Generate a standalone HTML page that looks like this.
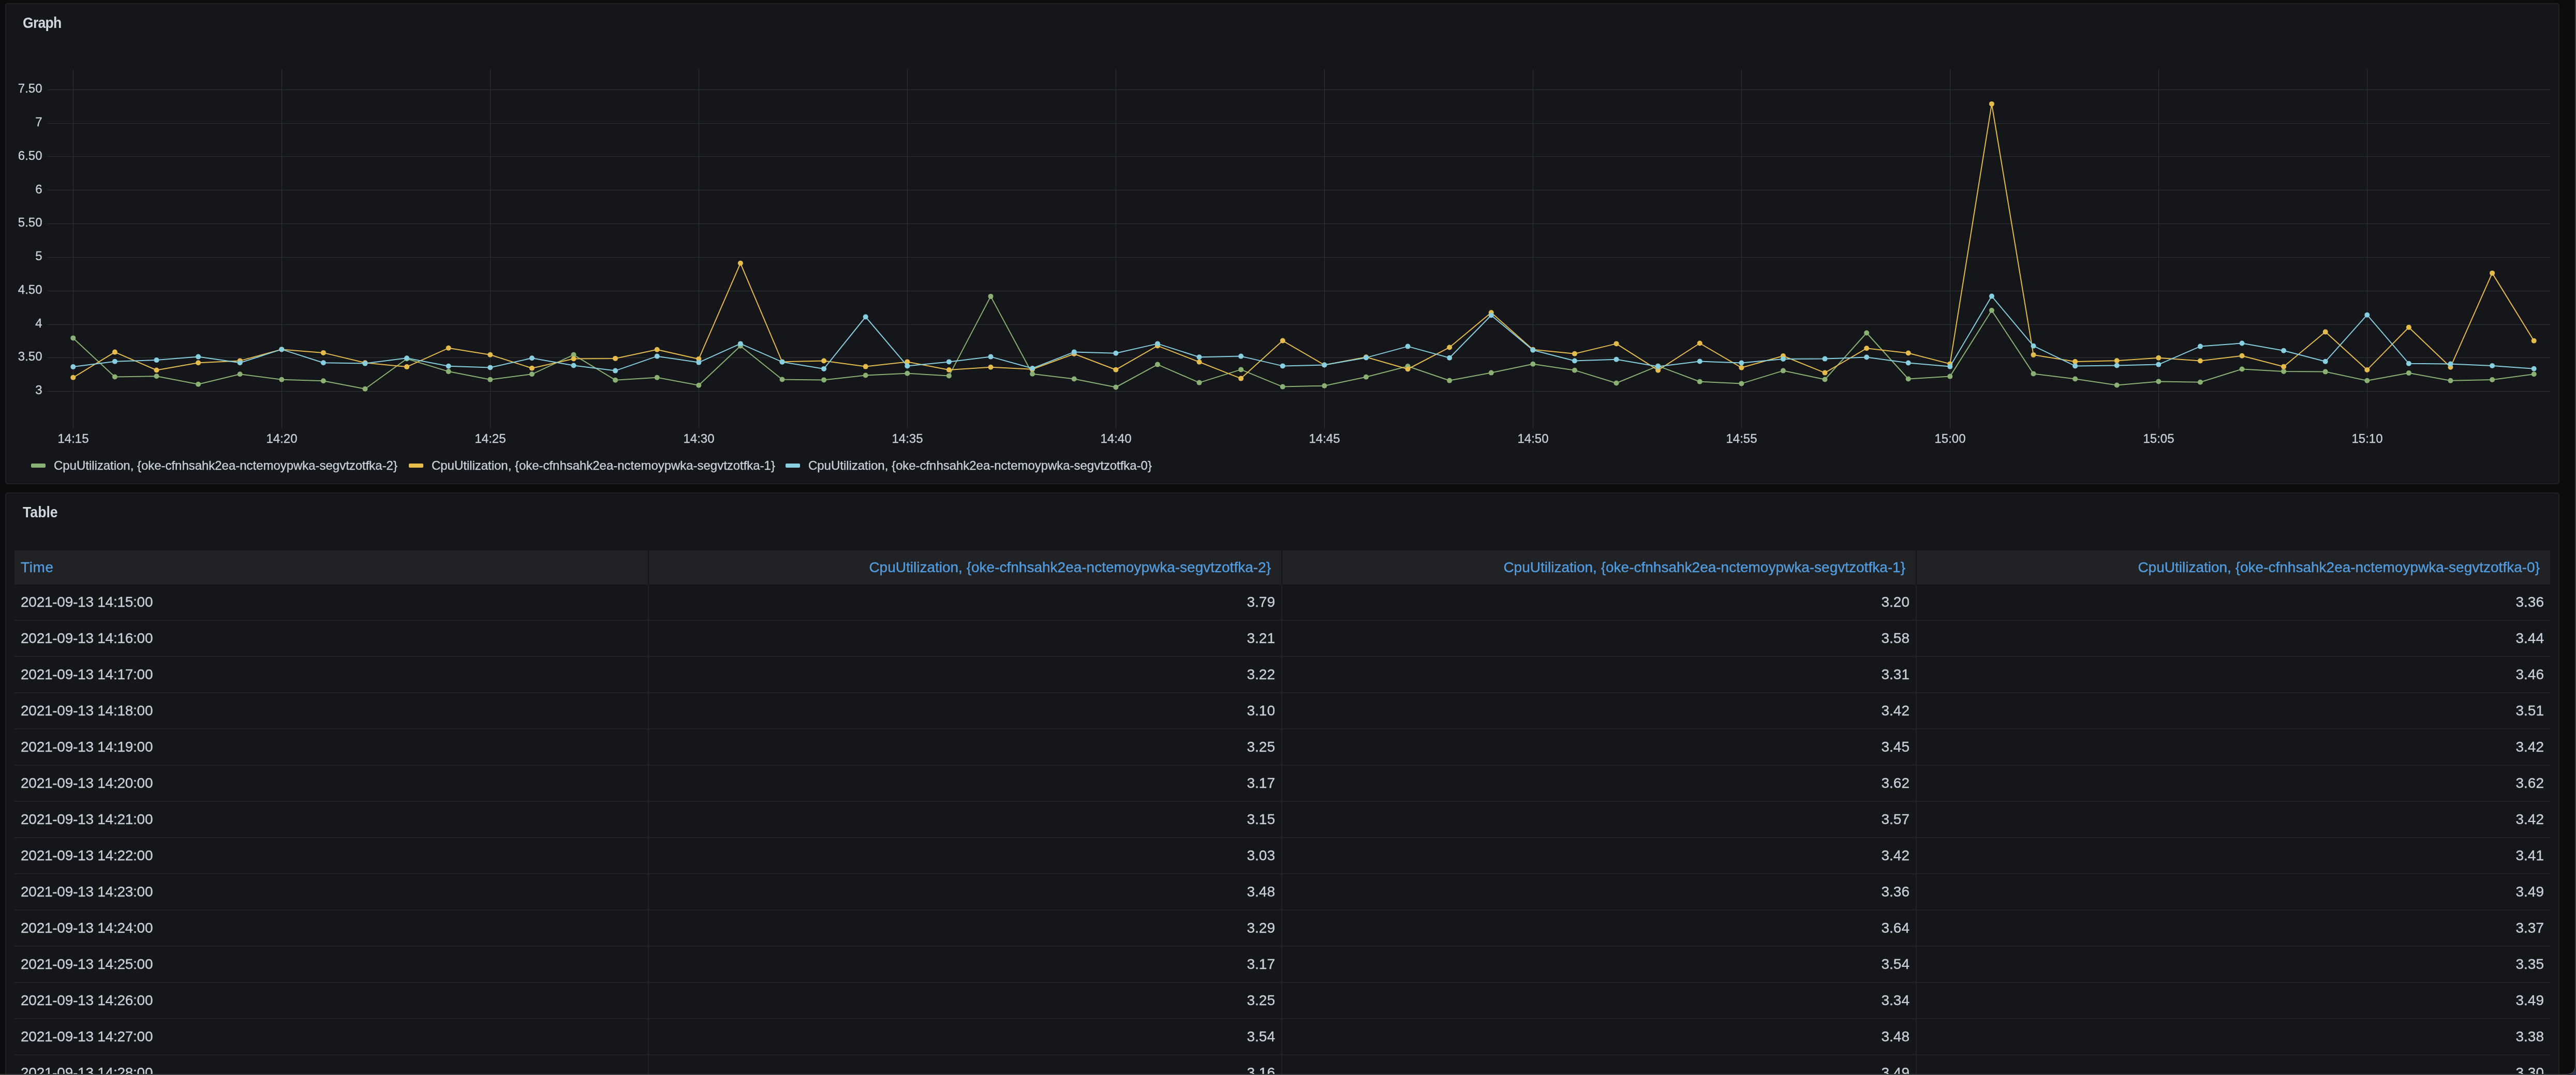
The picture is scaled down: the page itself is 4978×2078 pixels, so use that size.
<!DOCTYPE html>
<html lang="en"><head><meta charset="utf-8"><title>Explore - Grafana</title>
<style>
html,body{margin:0;padding:0}
body{width:4978px;height:2078px;overflow:hidden;background:#0b0c0e;position:relative;
font-family:"Liberation Sans",Arial,Helvetica,sans-serif;color:#c7d0d9}
.panel{position:absolute;left:10px;width:4936px;box-sizing:border-box;background:#141619;border:2px solid #202226;border-radius:5px}
#gp{top:6px;height:930px}
#tp{top:952px;height:1300px}
.ttl{position:absolute;left:44px;font-size:29px;font-weight:bold;line-height:32px;letter-spacing:-1.5px;color:#d0d7de;white-space:nowrap}
#fg{position:absolute;left:0;top:0;width:4978px;height:2078px;will-change:transform}
.ttl{transform-origin:0 50%}
.chart{position:absolute;left:0;top:0}
.ax text{font-size:24px;font-family:"Liberation Sans",Arial,sans-serif}
.sw{position:absolute;top:896px;width:28px;height:8px;border-radius:2px;display:block}
.lg{position:absolute;top:884px;font-size:24px;line-height:32px;white-space:nowrap;letter-spacing:-0.03px}
.th{position:absolute;top:1064px;height:66px;background:#202226;color:#539ee0;font-size:28px;line-height:66px;box-sizing:border-box;white-space:nowrap;overflow:hidden}
.tr{position:absolute;left:28px;width:4900px;height:70px;box-sizing:border-box;border-bottom:2px solid #202226}
.td,.th,.lg{-webkit-text-stroke:0.35px currentColor}
.ax text{stroke:currentColor;stroke-width:0.35px}
.td{position:absolute;top:0;height:68px;line-height:68px;font-size:28px;box-sizing:border-box;white-space:nowrap;padding:0 12px;border-right:2px solid #202226}
.c1{left:0;width:1226px;text-align:left;letter-spacing:-0.25px}
.c2{left:1226px;width:1224px;text-align:right}
.c3{left:2450px;width:1226px;text-align:right}
.c4{left:3676px;width:1224px;text-align:right;border-right:none}
.th.c1{left:28px;padding-left:12px;text-align:left;width:1224px;letter-spacing:0.6px}
.th.c2{left:1254px;width:1222px;text-align:right;padding-right:20px}
.th.c3{left:2478px;width:1224px;text-align:right;padding-right:20px}
.th.c4{left:3704px;width:1224px;text-align:right;padding-right:20px}
#wr{position:absolute;left:0;top:0;width:4978px;height:2078px;box-sizing:border-box;pointer-events:none}
</style></head>
<body>
<div class="panel" id="gp"></div>
<div class="panel" id="tp"></div>
<div id="fg">
<div class="ttl" style="top:28px;letter-spacing:-0.8px;transform:scaleX(0.915)">Graph</div>
<svg class="chart" width="4978" height="940" viewBox="0 0 4978 940">
<g fill="#2d3236" shape-rendering="crispEdges"><rect x="141" y="134" width="1" height="694"/><rect x="544" y="134" width="1" height="694"/><rect x="947" y="134" width="1" height="694"/><rect x="1350" y="134" width="1" height="694"/><rect x="1753" y="134" width="1" height="694"/><rect x="2156" y="134" width="1" height="694"/><rect x="2559" y="134" width="1" height="694"/><rect x="2962" y="134" width="1" height="694"/><rect x="3365" y="134" width="1" height="694"/><rect x="3768" y="134" width="1" height="694"/><rect x="4171" y="134" width="1" height="694"/><rect x="4574" y="134" width="1" height="694"/><rect x="92" y="756" width="4836" height="1"/><rect x="92" y="691" width="4836" height="1"/><rect x="92" y="627" width="4836" height="1"/><rect x="92" y="562" width="4836" height="1"/><rect x="92" y="497" width="4836" height="1"/><rect x="92" y="432" width="4836" height="1"/><rect x="92" y="367" width="4836" height="1"/><rect x="92" y="302" width="4836" height="1"/><rect x="92" y="238" width="4836" height="1"/><rect x="92" y="173" width="4836" height="1"/></g>
<polyline fill="none" stroke="#8ab173" stroke-width="2" stroke-linejoin="round" points="141.3,653.4 221.9,728.5 302.5,727.2 383.1,742.7 463.7,723.3 544.3,733.7 624.9,736.3 705.5,751.8 786.1,693.5 866.7,718.1 947.3,733.7 1027.9,723.3 1108.5,685.8 1189.1,734.7 1269.7,729.8 1350.3,744.8 1430.9,668.7 1511.5,733.5 1592.1,734.4 1672.7,725.5 1753.3,721.8 1833.9,726.4 1914.5,572.9 1995.1,722.7 2075.7,732.5 2156.3,748.5 2236.9,704.6 2317.5,739.6 2398.1,714.4 2478.7,747.6 2559.3,745.7 2639.9,728.8 2720.5,708.0 2801.1,735.6 2881.7,720.6 2962.3,703.7 3042.9,715.7 3123.5,740.5 3204.1,707.4 3284.7,737.7 3365.3,741.4 3445.9,716.6 3526.5,733.5 3607.1,643.5 3687.7,732.5 3768.3,727.6 3848.9,600.0 3929.5,722.4 4010.1,732.5 4090.7,744.5 4171.3,737.4 4251.9,738.7 4332.5,713.5 4413.1,717.9 4493.7,718.6 4574.3,735.8 4654.9,721.1 4735.5,735.8 4816.1,734.0 4896.7,723.2"/>
<g fill="#8ab173"><circle cx="141.3" cy="653.4" r="5"/><circle cx="221.9" cy="728.5" r="5"/><circle cx="302.5" cy="727.2" r="5"/><circle cx="383.1" cy="742.7" r="5"/><circle cx="463.7" cy="723.3" r="5"/><circle cx="544.3" cy="733.7" r="5"/><circle cx="624.9" cy="736.3" r="5"/><circle cx="705.5" cy="751.8" r="5"/><circle cx="786.1" cy="693.5" r="5"/><circle cx="866.7" cy="718.1" r="5"/><circle cx="947.3" cy="733.7" r="5"/><circle cx="1027.9" cy="723.3" r="5"/><circle cx="1108.5" cy="685.8" r="5"/><circle cx="1189.1" cy="734.7" r="5"/><circle cx="1269.7" cy="729.8" r="5"/><circle cx="1350.3" cy="744.8" r="5"/><circle cx="1430.9" cy="668.7" r="5"/><circle cx="1511.5" cy="733.5" r="5"/><circle cx="1592.1" cy="734.4" r="5"/><circle cx="1672.7" cy="725.5" r="5"/><circle cx="1753.3" cy="721.8" r="5"/><circle cx="1833.9" cy="726.4" r="5"/><circle cx="1914.5" cy="572.9" r="5"/><circle cx="1995.1" cy="722.7" r="5"/><circle cx="2075.7" cy="732.5" r="5"/><circle cx="2156.3" cy="748.5" r="5"/><circle cx="2236.9" cy="704.6" r="5"/><circle cx="2317.5" cy="739.6" r="5"/><circle cx="2398.1" cy="714.4" r="5"/><circle cx="2478.7" cy="747.6" r="5"/><circle cx="2559.3" cy="745.7" r="5"/><circle cx="2639.9" cy="728.8" r="5"/><circle cx="2720.5" cy="708.0" r="5"/><circle cx="2801.1" cy="735.6" r="5"/><circle cx="2881.7" cy="720.6" r="5"/><circle cx="2962.3" cy="703.7" r="5"/><circle cx="3042.9" cy="715.7" r="5"/><circle cx="3123.5" cy="740.5" r="5"/><circle cx="3204.1" cy="707.4" r="5"/><circle cx="3284.7" cy="737.7" r="5"/><circle cx="3365.3" cy="741.4" r="5"/><circle cx="3445.9" cy="716.6" r="5"/><circle cx="3526.5" cy="733.5" r="5"/><circle cx="3607.1" cy="643.5" r="5"/><circle cx="3687.7" cy="732.5" r="5"/><circle cx="3768.3" cy="727.6" r="5"/><circle cx="3848.9" cy="600.0" r="5"/><circle cx="3929.5" cy="722.4" r="5"/><circle cx="4010.1" cy="732.5" r="5"/><circle cx="4090.7" cy="744.5" r="5"/><circle cx="4171.3" cy="737.4" r="5"/><circle cx="4251.9" cy="738.7" r="5"/><circle cx="4332.5" cy="713.5" r="5"/><circle cx="4413.1" cy="717.9" r="5"/><circle cx="4493.7" cy="718.6" r="5"/><circle cx="4574.3" cy="735.8" r="5"/><circle cx="4654.9" cy="721.1" r="5"/><circle cx="4735.5" cy="735.8" r="5"/><circle cx="4816.1" cy="734.0" r="5"/><circle cx="4896.7" cy="723.2" r="5"/></g>
<polyline fill="none" stroke="#e5bb4c" stroke-width="2" stroke-linejoin="round" points="141.3,729.8 221.9,680.6 302.5,715.5 383.1,701.3 463.7,697.4 544.3,675.4 624.9,681.9 705.5,701.3 786.1,709.1 866.7,672.8 947.3,685.8 1027.9,711.7 1108.5,693.5 1189.1,692.9 1269.7,675.8 1350.3,693.9 1430.9,508.8 1511.5,699.4 1592.1,697.5 1672.7,708.6 1753.3,699.4 1833.9,715.0 1914.5,709.8 1995.1,713.8 2075.7,684.0 2156.3,714.7 2236.9,668.4 2317.5,699.7 2398.1,731.6 2478.7,658.6 2559.3,705.5 2639.9,690.2 2720.5,713.5 2801.1,671.5 2881.7,604.2 2962.3,675.8 3042.9,683.7 3123.5,664.4 3204.1,715.7 3284.7,663.5 3365.3,710.7 3445.9,688.0 3526.5,720.6 3607.1,673.3 3687.7,682.5 3768.3,703.4 3848.9,200.9 3929.5,685.9 4010.1,699.1 4090.7,697.2 4171.3,691.7 4251.9,697.5 4332.5,687.7 4413.1,708.7 4493.7,641.6 4574.3,714.9 4654.9,632.7 4735.5,709.7 4816.1,527.9 4896.7,658.8"/>
<g fill="#e5bb4c"><circle cx="141.3" cy="729.8" r="5"/><circle cx="221.9" cy="680.6" r="5"/><circle cx="302.5" cy="715.5" r="5"/><circle cx="383.1" cy="701.3" r="5"/><circle cx="463.7" cy="697.4" r="5"/><circle cx="544.3" cy="675.4" r="5"/><circle cx="624.9" cy="681.9" r="5"/><circle cx="705.5" cy="701.3" r="5"/><circle cx="786.1" cy="709.1" r="5"/><circle cx="866.7" cy="672.8" r="5"/><circle cx="947.3" cy="685.8" r="5"/><circle cx="1027.9" cy="711.7" r="5"/><circle cx="1108.5" cy="693.5" r="5"/><circle cx="1189.1" cy="692.9" r="5"/><circle cx="1269.7" cy="675.8" r="5"/><circle cx="1350.3" cy="693.9" r="5"/><circle cx="1430.9" cy="508.8" r="5"/><circle cx="1511.5" cy="699.4" r="5"/><circle cx="1592.1" cy="697.5" r="5"/><circle cx="1672.7" cy="708.6" r="5"/><circle cx="1753.3" cy="699.4" r="5"/><circle cx="1833.9" cy="715.0" r="5"/><circle cx="1914.5" cy="709.8" r="5"/><circle cx="1995.1" cy="713.8" r="5"/><circle cx="2075.7" cy="684.0" r="5"/><circle cx="2156.3" cy="714.7" r="5"/><circle cx="2236.9" cy="668.4" r="5"/><circle cx="2317.5" cy="699.7" r="5"/><circle cx="2398.1" cy="731.6" r="5"/><circle cx="2478.7" cy="658.6" r="5"/><circle cx="2559.3" cy="705.5" r="5"/><circle cx="2639.9" cy="690.2" r="5"/><circle cx="2720.5" cy="713.5" r="5"/><circle cx="2801.1" cy="671.5" r="5"/><circle cx="2881.7" cy="604.2" r="5"/><circle cx="2962.3" cy="675.8" r="5"/><circle cx="3042.9" cy="683.7" r="5"/><circle cx="3123.5" cy="664.4" r="5"/><circle cx="3204.1" cy="715.7" r="5"/><circle cx="3284.7" cy="663.5" r="5"/><circle cx="3365.3" cy="710.7" r="5"/><circle cx="3445.9" cy="688.0" r="5"/><circle cx="3526.5" cy="720.6" r="5"/><circle cx="3607.1" cy="673.3" r="5"/><circle cx="3687.7" cy="682.5" r="5"/><circle cx="3768.3" cy="703.4" r="5"/><circle cx="3848.9" cy="200.9" r="5"/><circle cx="3929.5" cy="685.9" r="5"/><circle cx="4010.1" cy="699.1" r="5"/><circle cx="4090.7" cy="697.2" r="5"/><circle cx="4171.3" cy="691.7" r="5"/><circle cx="4251.9" cy="697.5" r="5"/><circle cx="4332.5" cy="687.7" r="5"/><circle cx="4413.1" cy="708.7" r="5"/><circle cx="4493.7" cy="641.6" r="5"/><circle cx="4574.3" cy="714.9" r="5"/><circle cx="4654.9" cy="632.7" r="5"/><circle cx="4735.5" cy="709.7" r="5"/><circle cx="4816.1" cy="527.9" r="5"/><circle cx="4896.7" cy="658.8" r="5"/></g>
<polyline fill="none" stroke="#86cee0" stroke-width="2" stroke-linejoin="round" points="141.3,709.1 221.9,698.7 302.5,696.1 383.1,689.6 463.7,701.3 544.3,675.4 624.9,701.3 705.5,702.6 786.1,692.2 866.7,707.8 947.3,710.4 1027.9,692.2 1108.5,706.5 1189.1,716.6 1269.7,688.6 1350.3,700.6 1430.9,664.4 1511.5,699.7 1592.1,712.9 1672.7,612.5 1753.3,707.4 1833.9,699.4 1914.5,689.6 1995.1,712.0 2075.7,680.4 2156.3,682.8 2236.9,664.4 2317.5,690.2 2398.1,688.6 2478.7,707.4 2559.3,705.5 2639.9,691.4 2720.5,669.6 2801.1,691.7 2881.7,609.5 2962.3,676.7 3042.9,697.5 3123.5,694.8 3204.1,708.6 3284.7,698.5 3365.3,701.5 3445.9,693.9 3526.5,693.6 3607.1,690.5 3687.7,701.5 3768.3,708.6 3848.9,572.6 3929.5,668.7 4010.1,707.4 4090.7,706.4 4171.3,704.6 4251.9,669.6 4332.5,663.5 4413.1,677.8 4493.7,698.8 4574.3,608.7 4654.9,702.7 4735.5,703.6 4816.1,707.0 4896.7,712.8"/>
<g fill="#86cee0"><circle cx="141.3" cy="709.1" r="5"/><circle cx="221.9" cy="698.7" r="5"/><circle cx="302.5" cy="696.1" r="5"/><circle cx="383.1" cy="689.6" r="5"/><circle cx="463.7" cy="701.3" r="5"/><circle cx="544.3" cy="675.4" r="5"/><circle cx="624.9" cy="701.3" r="5"/><circle cx="705.5" cy="702.6" r="5"/><circle cx="786.1" cy="692.2" r="5"/><circle cx="866.7" cy="707.8" r="5"/><circle cx="947.3" cy="710.4" r="5"/><circle cx="1027.9" cy="692.2" r="5"/><circle cx="1108.5" cy="706.5" r="5"/><circle cx="1189.1" cy="716.6" r="5"/><circle cx="1269.7" cy="688.6" r="5"/><circle cx="1350.3" cy="700.6" r="5"/><circle cx="1430.9" cy="664.4" r="5"/><circle cx="1511.5" cy="699.7" r="5"/><circle cx="1592.1" cy="712.9" r="5"/><circle cx="1672.7" cy="612.5" r="5"/><circle cx="1753.3" cy="707.4" r="5"/><circle cx="1833.9" cy="699.4" r="5"/><circle cx="1914.5" cy="689.6" r="5"/><circle cx="1995.1" cy="712.0" r="5"/><circle cx="2075.7" cy="680.4" r="5"/><circle cx="2156.3" cy="682.8" r="5"/><circle cx="2236.9" cy="664.4" r="5"/><circle cx="2317.5" cy="690.2" r="5"/><circle cx="2398.1" cy="688.6" r="5"/><circle cx="2478.7" cy="707.4" r="5"/><circle cx="2559.3" cy="705.5" r="5"/><circle cx="2639.9" cy="691.4" r="5"/><circle cx="2720.5" cy="669.6" r="5"/><circle cx="2801.1" cy="691.7" r="5"/><circle cx="2881.7" cy="609.5" r="5"/><circle cx="2962.3" cy="676.7" r="5"/><circle cx="3042.9" cy="697.5" r="5"/><circle cx="3123.5" cy="694.8" r="5"/><circle cx="3204.1" cy="708.6" r="5"/><circle cx="3284.7" cy="698.5" r="5"/><circle cx="3365.3" cy="701.5" r="5"/><circle cx="3445.9" cy="693.9" r="5"/><circle cx="3526.5" cy="693.6" r="5"/><circle cx="3607.1" cy="690.5" r="5"/><circle cx="3687.7" cy="701.5" r="5"/><circle cx="3768.3" cy="708.6" r="5"/><circle cx="3848.9" cy="572.6" r="5"/><circle cx="3929.5" cy="668.7" r="5"/><circle cx="4010.1" cy="707.4" r="5"/><circle cx="4090.7" cy="706.4" r="5"/><circle cx="4171.3" cy="704.6" r="5"/><circle cx="4251.9" cy="669.6" r="5"/><circle cx="4332.5" cy="663.5" r="5"/><circle cx="4413.1" cy="677.8" r="5"/><circle cx="4493.7" cy="698.8" r="5"/><circle cx="4574.3" cy="608.7" r="5"/><circle cx="4654.9" cy="702.7" r="5"/><circle cx="4735.5" cy="703.6" r="5"/><circle cx="4816.1" cy="707.0" r="5"/><circle cx="4896.7" cy="712.8" r="5"/></g>
<g class="ax" fill="#c7d0d9" color="#c7d0d9"><text x="81.5" y="762.2" text-anchor="end">3</text><text x="81.5" y="697.4" text-anchor="end">3.50</text><text x="81.5" y="632.7" text-anchor="end">4</text><text x="81.5" y="567.9" text-anchor="end">4.50</text><text x="81.5" y="503.1" text-anchor="end">5</text><text x="81.5" y="438.4" text-anchor="end">5.50</text><text x="81.5" y="373.6" text-anchor="end">6</text><text x="81.5" y="308.8" text-anchor="end">6.50</text><text x="81.5" y="244.1" text-anchor="end">7</text><text x="81.5" y="179.3" text-anchor="end">7.50</text><text x="141.5" y="856.4" text-anchor="middle">14:15</text><text x="544.5" y="856.4" text-anchor="middle">14:20</text><text x="947.5" y="856.4" text-anchor="middle">14:25</text><text x="1350.5" y="856.4" text-anchor="middle">14:30</text><text x="1753.5" y="856.4" text-anchor="middle">14:35</text><text x="2156.5" y="856.4" text-anchor="middle">14:40</text><text x="2559.5" y="856.4" text-anchor="middle">14:45</text><text x="2962.5" y="856.4" text-anchor="middle">14:50</text><text x="3365.5" y="856.4" text-anchor="middle">14:55</text><text x="3768.5" y="856.4" text-anchor="middle">15:00</text><text x="4171.5" y="856.4" text-anchor="middle">15:05</text><text x="4574.5" y="856.4" text-anchor="middle">15:10</text></g>
</svg>
<i class="sw" style="left:60px;background:#8ab173"></i><span class="lg" style="left:104px">CpuUtilization, {oke-cfnhsahk2ea-nctemoypwka-segvtzotfka-2}</span><i class="sw" style="left:790px;background:#e5bb4c"></i><span class="lg" style="left:834px">CpuUtilization, {oke-cfnhsahk2ea-nctemoypwka-segvtzotfka-1}</span><i class="sw" style="left:1518px;background:#86cee0"></i><span class="lg" style="left:1562px">CpuUtilization, {oke-cfnhsahk2ea-nctemoypwka-segvtzotfka-0}</span>
<div class="ttl" style="top:974px;letter-spacing:0;transform:scaleX(0.92)">Table</div>
<div class="th c1">Time</div><div class="th c2">CpuUtilization, {oke-cfnhsahk2ea-nctemoypwka-segvtzotfka-2}</div><div class="th c3">CpuUtilization, {oke-cfnhsahk2ea-nctemoypwka-segvtzotfka-1}</div><div class="th c4">CpuUtilization, {oke-cfnhsahk2ea-nctemoypwka-segvtzotfka-0}</div>
<div class="tr" style="top:1130px"><div class="td c1">2021-09-13 14:15:00</div><div class="td c2">3.79</div><div class="td c3">3.20</div><div class="td c4">3.36</div></div><div class="tr" style="top:1200px"><div class="td c1">2021-09-13 14:16:00</div><div class="td c2">3.21</div><div class="td c3">3.58</div><div class="td c4">3.44</div></div><div class="tr" style="top:1270px"><div class="td c1">2021-09-13 14:17:00</div><div class="td c2">3.22</div><div class="td c3">3.31</div><div class="td c4">3.46</div></div><div class="tr" style="top:1340px"><div class="td c1">2021-09-13 14:18:00</div><div class="td c2">3.10</div><div class="td c3">3.42</div><div class="td c4">3.51</div></div><div class="tr" style="top:1410px"><div class="td c1">2021-09-13 14:19:00</div><div class="td c2">3.25</div><div class="td c3">3.45</div><div class="td c4">3.42</div></div><div class="tr" style="top:1480px"><div class="td c1">2021-09-13 14:20:00</div><div class="td c2">3.17</div><div class="td c3">3.62</div><div class="td c4">3.62</div></div><div class="tr" style="top:1550px"><div class="td c1">2021-09-13 14:21:00</div><div class="td c2">3.15</div><div class="td c3">3.57</div><div class="td c4">3.42</div></div><div class="tr" style="top:1620px"><div class="td c1">2021-09-13 14:22:00</div><div class="td c2">3.03</div><div class="td c3">3.42</div><div class="td c4">3.41</div></div><div class="tr" style="top:1690px"><div class="td c1">2021-09-13 14:23:00</div><div class="td c2">3.48</div><div class="td c3">3.36</div><div class="td c4">3.49</div></div><div class="tr" style="top:1760px"><div class="td c1">2021-09-13 14:24:00</div><div class="td c2">3.29</div><div class="td c3">3.64</div><div class="td c4">3.37</div></div><div class="tr" style="top:1830px"><div class="td c1">2021-09-13 14:25:00</div><div class="td c2">3.17</div><div class="td c3">3.54</div><div class="td c4">3.35</div></div><div class="tr" style="top:1900px"><div class="td c1">2021-09-13 14:26:00</div><div class="td c2">3.25</div><div class="td c3">3.34</div><div class="td c4">3.49</div></div><div class="tr" style="top:1970px"><div class="td c1">2021-09-13 14:27:00</div><div class="td c2">3.54</div><div class="td c3">3.48</div><div class="td c4">3.38</div></div><div class="tr" style="top:2040px"><div class="td c1">2021-09-13 14:28:00</div><div class="td c2">3.16</div><div class="td c3">3.49</div><div class="td c4">3.30</div></div>
</div>
<svg id="wr" width="4978" height="2078" viewBox="0 0 4978 2078">
<path d="M4960 2078 L4978 2078 L4978 2060 C4978 2072 4972 2078 4960 2078 Z" fill="#2c3a55"/>
<path d="M0 2077 L4959 2077 C4971 2077 4977 2071 4977 2059 L4977 0" fill="none" stroke="#424345" stroke-width="2"/>
</svg>
</body></html>
